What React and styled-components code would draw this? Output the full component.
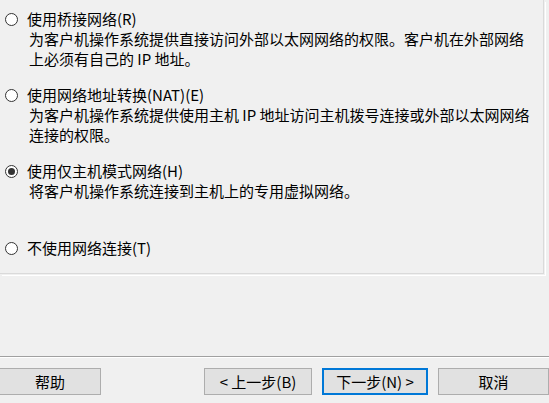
import React from 'react'
import styled, { createGlobalStyle } from 'styled-components'

const GlobalStyle = createGlobalStyle`
  html, body {
    margin: 0;
    padding: 0;
    background: #f0f0f0;
  }
  * {
    box-sizing: border-box;
  }
`

const options = [
  {
    label: '使用桥接网络(R)',
    desc: [
      '为客户机操作系统提供直接访问外部以太网网络的权限。客户机在外部网络',
      '上必须有自己的 IP 地址。',
    ],
  },
  {
    label: '使用网络地址转换(NAT)(E)',
    desc: [
      '为客户机操作系统提供使用主机 IP 地址访问主机拨号连接或外部以太网网络',
      '连接的权限。',
    ],
  },
  {
    label: '使用仅主机模式网络(H)',
    desc: ['将客户机操作系统连接到主机上的专用虚拟网络。'],
    checked: true,
  },
  {
    label: '不使用网络连接(T)',
    desc: [],
    gap: 37,
  },
]

const App = () => {
  return (
    <Window>
      <GlobalStyle />
      <Panel>
        {options.map((o) => (
          <Option key={o.label} $gap={o.gap}>
            <Title>
              <Radio $checked={o.checked} />
              <span>{o.label}</span>
            </Title>
            {o.desc.map((line) => (
              <Desc key={line}>{line}</Desc>
            ))}
          </Option>
        ))}
      </Panel>
      <Separator />
      <Footer>
        <Button $width={102} $left={-1}>帮助</Button>
        <Right>
          <Button $width={108}>&lt; 上一步(B)</Button>
          <Button $width={106} $primary>下一步(N) &gt;</Button>
          <Button $width={111}>取消</Button>
        </Right>
      </Footer>
    </Window>
  )
}

const Window = styled.div`
  width: 549px;
  height: 403px;
  display: flex;
  flex-direction: column;
  background: #f0f0f0;
  font-family: 'Noto Sans CJK SC', 'Noto Sans', sans-serif;
  font-size: 15px;
  color: #000;
  overflow: hidden;
`

const Panel = styled.div`
  width: 544px;
  height: 274px;
  padding-top: 9px;
  border-right: 1px solid #dadada;
  border-bottom: 1px solid #dadada;
  box-shadow: 1px 1px 0 #f0f0f0, 2px 2px 0 #ffffff;
  display: flex;
  flex-direction: column;
`

const Option = styled.div`
  display: flex;
  flex-direction: column;
  margin-top: ${(p) => (p.$gap !== undefined ? p.$gap : 16)}px;
  &:first-child {
    margin-top: 0;
  }
`

const Title = styled.div`
  display: flex;
  align-items: center;
  height: 20px;
  line-height: 20px;
  white-space: nowrap;
  padding-left: 5px;
  gap: 9px;
`

const Radio = styled.span`
  position: relative;
  width: 13px;
  height: 13px;
  flex: none;
  border: 1px solid #333;
  border-radius: 50%;
  background: #fff;
  &::after {
    content: '';
    display: ${(p) => (p.$checked ? 'block' : 'none')};
    position: absolute;
    left: 2px;
    top: 2px;
    width: 7px;
    height: 7px;
    border-radius: 50%;
    background: #333;
  }
`

const Desc = styled.div`
  height: 20px;
  line-height: 20px;
  padding-left: 29px;
  white-space: nowrap;
`

const Separator = styled.div`
  margin-top: 82px;
  height: 2px;
  border-top: 1px solid #a0a0a0;
  border-bottom: 1px solid #ffffff;
`

const Footer = styled.div`
  margin-top: 10px;
  display: flex;
  align-items: center;
`

const Right = styled.div`
  margin-left: auto;
  display: flex;
  gap: 10px;
`

const Button = styled.div`
  width: ${(p) => p.$width}px;
  margin-left: ${(p) => p.$left || 0}px;
  height: 27px;
  display: flex;
  align-items: center;
  justify-content: center;
  background: #e1e1e1;
  border: ${(p) => (p.$primary ? '2px solid #0078d7' : '1px solid #adadad')};
  white-space: nowrap;
  font-size: 15px;
`

export default App
